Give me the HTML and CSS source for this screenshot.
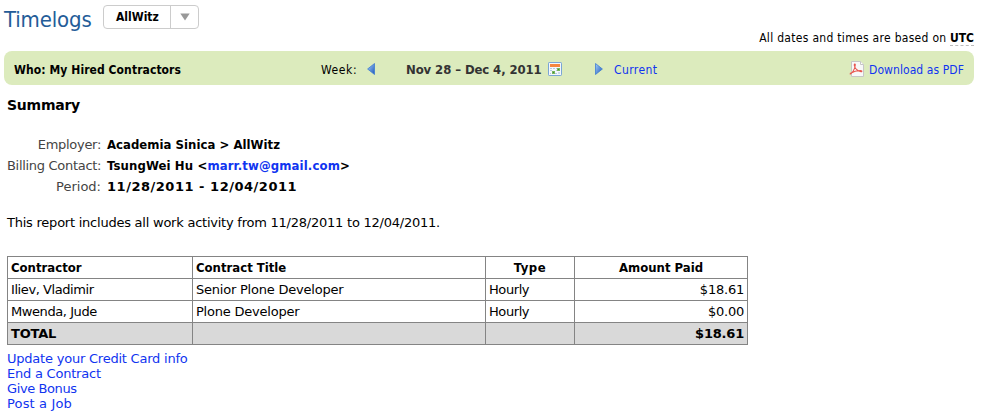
FILE: index.html
```
<!DOCTYPE html>
<html lang="en">
<head>
<meta charset="utf-8">
<title>Timelogs</title>
<link rel="stylesheet" href="styles.css">
</head>
<body>
<header class="top">
  <h1>Timelogs</h1>
  <div class="picker"><b>AllWitz</b><i><svg width="10" height="8" viewBox="0 0 10 8"><path d="M0.3 0.5h9.4L5 7.5z" fill="#999"/></svg></i></div>
  <p class="zone"><span class="note">All dates and times are based on</span> <b class="utc">UTC</b></p>
</header>
<nav class="bar">
  <b class="who">Who: My Hired Contractors</b>
  <span class="week">Week:</span>
  <svg class="prev" width="8" height="12" viewBox="0 0 8 12"><defs><linearGradient id="g" x1="0" y1="0" x2="1" y2="1"><stop offset="0" stop-color="#a5d0fa"/><stop offset="1" stop-color="#1d55ba"/></linearGradient></defs><path d="M7.5 .5v11L.6 6z" fill="url(#g)" stroke="#3e7cd2" stroke-width=".8"/></svg>
  <b class="range">Nov 28 – Dec 4, 2011</b>
  <svg class="cal" width="14" height="14" viewBox="0 0 14 14"><rect x=".5" y=".5" width="13" height="13" rx=".7" fill="#f4f8fc" stroke="#7aa5d5"/><path d="M2 2h10v3H2z" fill="#f5863f"/><path d="M2 6h2v1H2zM5 6h2v1H5zM8 6h1v1H8zM2 8h2v1H2zM8 8h1v1H8zM2 11h1v1H2zM7 11h2v1H7z" fill="#b5c9df"/><path d="M9 6h3v3H9zM4 9h3v3H4z" fill="#79b65c"/><path d="M10 7h1v1h-1zM5 10h1v1H5z" fill="#3f8a35"/><path d="M10 10h2v2h-2z" fill="#c9d9e9"/></svg>
  <svg class="next" width="8" height="12" viewBox="0 0 8 12"><path d="M.5 .5v11L7.4 6z" fill="url(#g)" stroke="#3e7cd2" stroke-width=".8"/></svg>
  <a class="current">Current</a>
  <svg class="pdf" width="16" height="16" viewBox="0 0 16 16"><path d="M2.5 .5h9l3 3v12h-12z" fill="#f8f8f8" stroke="#c6c6c6"/><path d="M11.5 .5v3h3" fill="#fff" stroke="#c6c6c6"/><path d="M.8 13.100C3 12.600 6 8.500 6.300 3.800C6.300 2.500 5 3 5.300 4.500C6 7.500 9 10.500 12 10.700C13.500 10.600 13 9.500 11.200 9.500C8.500 9.500 4 10.800 1 12.500" fill="none" stroke="#e8564f" stroke-width="1.100"/></svg>
  <a class="download">Download as PDF</a>
</nav>
<main>
  <h2>Summary</h2>
  <dl>
    <dt>Employer:</dt><dd>Academia Sinica &gt; AllWitz</dd>
    <dt>Billing Contact:</dt><dd class="contact">TsungWei Hu &lt;<a>marr.tw@gmail.com</a>&gt;</dd>
    <dt class="period">Period:</dt><dd class="dates">11/28/2011 - 12/04/2011</dd>
  </dl>
  <p class="report">This report includes all work activity from 11/28/2011 to 12/04/2011.</p>
  <table>
    <colgroup><col class="c1"><col class="c2"><col class="c3"><col class="c4"></colgroup>
    <thead><tr><th>Contractor</th><th>Contract Title</th><th class="mid type">Type</th><th class="mid">Amount Paid</th></tr></thead>
    <tbody>
      <tr><td class="name">Iliev, Vladimir</td><td>Senior Plone Developer</td><td class="name">Hourly</td><td class="num">$18.61</td></tr>
      <tr><td class="name">Mwenda, Jude</td><td>Plone Developer</td><td class="name">Hourly</td><td class="num">$0.00</td></tr>
    </tbody>
    <tfoot><tr><th>TOTAL</th><td></td><td></td><th class="num">$18.61</th></tr></tfoot>
  </table>
  <ul>
    <li><a>Update your Credit Card info</a></li>
    <li><a>End a Contract</a></li>
    <li class="bonus"><a>Give Bonus</a></li>
    <li class="post"><a>Post a Job</a></li>
  </ul>
</main>
</body>
</html>
```
FILE: styles.css
```
* { box-sizing: border-box; }
body { margin: 0; height: 412px; overflow: hidden; background: #fff; color: #000; font: 13px/15px Verdana, "DejaVu Sans", sans-serif; white-space: nowrap; }
h1, h2, p, dl, dd, ul { margin: 0; padding: 0; }
a { color: #1034f0; }
svg { display: block; flex: none; }
.top, .bar, dd, thead th { font-family: Tahoma, "DejaVu Sans Condensed", "DejaVu Sans", sans-serif; }
.top { display: flex; height: 51px; padding-left: 4px; }
h1 { width: 99px; padding-top: 6px; font-size: 22px; line-height: 27px; font-weight: 400; letter-spacing: -.15px; color: #245c98; }
.picker { display: flex; width: 96px; height: 24px; margin-top: 5px; border: 1px solid #ccc; border-radius: 4px; font-size: 12px; line-height: 22px; }
.picker b { width: 67px; padding-left: 12px; border-right: 1px solid #ccc; }
.picker i { display: flex; flex: 1; align-items: center; justify-content: center; }
.zone { margin-left: auto; margin-right: 7px; padding-top: 31px; font-size: 12px; }
.note { letter-spacing: .3px; }
.utc { display: inline-block; height: 15px; border-bottom: 1px dashed #bbb; }
.bar { display: flex; align-items: center; width: 970px; height: 34px; margin-left: 4px; padding: 2px 0 0 10px; background: #dcebbd; border-radius: 8px; font-size: 12px; line-height: 17px; }
.bar b, .bar span, .bar a { padding-top: 2px; }
.bar .range { padding-top: 1px; }
.who { width: 307px; letter-spacing: .08px; }
.week { width: 46px; letter-spacing: .6px; }
.range { width: 142px; margin-left: 31px; color: #333; font-size: 13px; letter-spacing: -.1px; }
.next { margin-left: 33px; }
.current { width: 236px; margin-left: 11px; letter-spacing: .42px; }
.pdf { margin-left: -1px; }
.download { margin-left: 4px; letter-spacing: .08px; }
main { padding: 12px 0 0 7px; }
h2 { font-size: 14px; line-height: 16px; letter-spacing: -.25px; }
dl { display: grid; grid-template-columns: 94px 1fr; grid-auto-rows: 21px; column-gap: 6px; margin-top: 21px; line-height: 21px; }
dt { text-align: right; color: #444; letter-spacing: -.3px; }
.period { letter-spacing: 0; }
dd { font-weight: 700; letter-spacing: .03px; }
.contact { letter-spacing: .13px; }
.dates { font-family: Verdana, "DejaVu Sans", sans-serif; letter-spacing: .52px; }
.report { margin-top: 18px; letter-spacing: -.235px; }
table { width: 741px; margin-top: 26px; border-collapse: collapse; table-layout: fixed; }
.c1 { width: 185px; }
.c2 { width: 293px; }
.c3 { width: 89px; }
.c4 { width: 173px; }
tr { height: 22px; }
th, td { padding: 0 3px; border: 1px solid #848484; text-align: left; }
td { letter-spacing: -.22px; }
tfoot th { letter-spacing: -.2px; }
.name { letter-spacing: -.42px; }
.type { letter-spacing: .5px; }
.mid { text-align: center; }
.num { text-align: right; }
tfoot { background: #d9d9d9; }
ul { margin-top: 6px; list-style: none; letter-spacing: -.22px; }
.bonus { letter-spacing: -.4px; }
.post { letter-spacing: .15px; }
```
